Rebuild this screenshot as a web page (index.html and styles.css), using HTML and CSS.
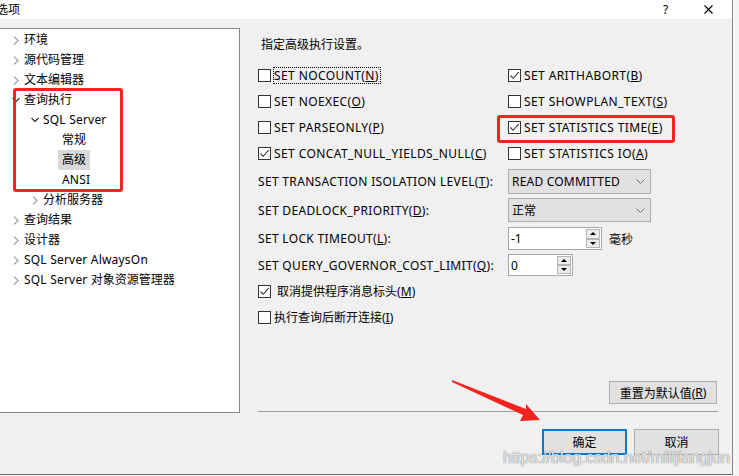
FILE: index.html
```html
<!DOCTYPE html>
<html>
<head>
<meta charset="utf-8">
<link rel="stylesheet" href="styles.css">
</head>
<body>
<div class="window">
  <div class="titlebar">
    <span class="title">选项</span>
    <span class="help">?</span>
    <span class="close"><svg width="9" height="9" viewBox="0 0 9 9"><path d="M0.5 0.5 L8.5 8.5 M8.5 0.5 L0.5 8.5" stroke="#000" stroke-width="1.1" fill="none"/></svg></span>
  </div>
  <div class="content">
    <div class="tree">
      <div class="node l0"><span class="chev"><svg width="6" height="9" viewBox="0 0 6 9"><path d="M1 0.5 L5 4.5 L1 8.5" stroke="#a6a6a6" stroke-width="1.3" fill="none"/></svg></span>环境</div>
      <div class="node l0"><span class="chev"><svg width="6" height="9" viewBox="0 0 6 9"><path d="M1 0.5 L5 4.5 L1 8.5" stroke="#a6a6a6" stroke-width="1.3" fill="none"/></svg></span>源代码管理</div>
      <div class="node l0"><span class="chev"><svg width="6" height="9" viewBox="0 0 6 9"><path d="M1 0.5 L5 4.5 L1 8.5" stroke="#a6a6a6" stroke-width="1.3" fill="none"/></svg></span>文本编辑器</div>
      <div class="node l0"><span class="chev"><svg width="8" height="6" viewBox="0 0 8 6"><path d="M0.5 1 L4 4.5 L7.5 1" stroke="#404040" stroke-width="1.3" fill="none"/></svg></span>查询执行</div>
      <div class="node l1"><span class="chev"><svg width="8" height="6" viewBox="0 0 8 6"><path d="M0.5 1 L4 4.5 L7.5 1" stroke="#404040" stroke-width="1.3" fill="none"/></svg></span><span class="lat">SQL Server</span></div>
      <div class="node l2"><span class="leaf">常规</span></div>
      <div class="node l2"><span class="leaf selected">高级</span></div>
      <div class="node l2"><span class="leaf lat">ANSI</span></div>
      <div class="node l1"><span class="chev"><svg width="6" height="9" viewBox="0 0 6 9"><path d="M1 0.5 L5 4.5 L1 8.5" stroke="#a6a6a6" stroke-width="1.3" fill="none"/></svg></span>分析服务器</div>
      <div class="node l0"><span class="chev"><svg width="6" height="9" viewBox="0 0 6 9"><path d="M1 0.5 L5 4.5 L1 8.5" stroke="#a6a6a6" stroke-width="1.3" fill="none"/></svg></span>查询结果</div>
      <div class="node l0"><span class="chev"><svg width="6" height="9" viewBox="0 0 6 9"><path d="M1 0.5 L5 4.5 L1 8.5" stroke="#a6a6a6" stroke-width="1.3" fill="none"/></svg></span>设计器</div>
      <div class="node l0"><span class="chev"><svg width="6" height="9" viewBox="0 0 6 9"><path d="M1 0.5 L5 4.5 L1 8.5" stroke="#a6a6a6" stroke-width="1.3" fill="none"/></svg></span><span class="lat">SQL Server AlwaysOn</span></div>
      <div class="node l0"><span class="chev"><svg width="6" height="9" viewBox="0 0 6 9"><path d="M1 0.5 L5 4.5 L1 8.5" stroke="#a6a6a6" stroke-width="1.3" fill="none"/></svg></span><span class="lat">SQL Server</span>&nbsp;对象资源管理器</div>
    </div>
    <div class="main">
      <div class="intro">指定高级执行设置。</div>
      <div class="checks">
        <div class="cb"><span class="box"></span><span class="txt focus">SET NOCOUNT(<u>N</u>)</span></div>
        <div class="cb"><span class="box"><svg width="11" height="11" viewBox="0 0 11 11"><path d="M1.5 5.5 L4.2 8.3 L9.6 2.2" stroke="#333" stroke-width="1.1" fill="none"/></svg></span><span class="txt">SET ARITHABORT(<u>B</u>)</span></div>
        <div class="cb"><span class="box"></span><span class="txt">SET NOEXEC(<u>O</u>)</span></div>
        <div class="cb"><span class="box"></span><span class="txt">SET SHOWPLAN_TEXT(<u>S</u>)</span></div>
        <div class="cb"><span class="box"></span><span class="txt">SET PARSEONLY(<u>P</u>)</span></div>
        <div class="cb"><span class="box"><svg width="11" height="11" viewBox="0 0 11 11"><path d="M1.5 5.5 L4.2 8.3 L9.6 2.2" stroke="#333" stroke-width="1.1" fill="none"/></svg></span><span class="txt">SET STATISTICS TIME(<u>E</u>)</span></div>
        <div class="cb"><span class="box"><svg width="11" height="11" viewBox="0 0 11 11"><path d="M1.5 5.5 L4.2 8.3 L9.6 2.2" stroke="#333" stroke-width="1.1" fill="none"/></svg></span><span class="txt">SET CONCAT_NULL_YIELDS_NULL(<u>C</u>)</span></div>
        <div class="cb"><span class="box"></span><span class="txt">SET STATISTICS IO(<u>A</u>)</span></div>
      </div>
      <div class="setting s1"><span class="lbl">SET TRANSACTION ISOLATION LEVEL(<u>T</u>):</span><div class="select"><span class="lat">READ COMMITTED</span><svg width="9" height="5" viewBox="0 0 9 5"><path d="M0.5 0.5 L4.5 4.5 L8.5 0.5" stroke="#707070" stroke-width="1" fill="none"/></svg></div></div>
      <div class="setting s2"><span class="lbl">SET DEADLOCK_PRIORITY(<u>D</u>):</span><div class="select">正常<svg width="9" height="5" viewBox="0 0 9 5"><path d="M0.5 0.5 L4.5 4.5 L8.5 0.5" stroke="#707070" stroke-width="1" fill="none"/></svg></div></div>
      <div class="setting s3"><span class="lbl">SET LOCK TIMEOUT(<u>L</u>):</span><div class="spin wide"><span class="val">-1</span><span class="arrows"><span class="ab"><i class="up"></i></span><span class="ab"><i class="down"></i></span></span></div><span class="unit">毫秒</span></div>
      <div class="setting s4"><span class="lbl">SET QUERY_GOVERNOR_COST_LIMIT(<u>Q</u>):</span><div class="spin narrow"><span class="val">0</span><span class="arrows"><span class="ab"><i class="up"></i></span><span class="ab"><i class="down"></i></span></span></div></div>
      <div class="cb single first"><span class="box"><svg width="11" height="11" viewBox="0 0 11 11"><path d="M1.5 5.5 L4.2 8.3 L9.6 2.2" stroke="#333" stroke-width="1.1" fill="none"/></svg></span><span class="txt">&nbsp;取消提供程序消息标头(<u>M</u>)</span></div>
      <div class="cb single"><span class="box"></span><span class="txt">执行查询后断开连接(<u>I</u>)</span></div>
      <div class="btn reset">重置为默认值(<u>R</u>)</div>
      <div class="sep"></div>
      <div class="buttons">
        <div class="btn ok">确定</div>
        <div class="btn cancel">取消</div>
      </div>
    </div>
  </div>
  <div class="mark box-tree"></div>
  <div class="mark box-stat"></div>
  <svg class="arrow" width="100" height="50" viewBox="0 0 100 50"><polygon points="5,6 79,35 79,30 93,46 73,47 76,41 5,8" fill="#f5231d"/></svg>
  <div class="watermark">https://blog.csdn.net/milijiangjun</div>
</div>
</body>
</html>
```

FILE: styles.css
```css
html, body {
  margin: 0;
  padding: 0;
}
body {
  width: 739px;
  height: 476px;
  overflow: hidden;
  background: #f5f5f5;
  font-family: "Noto Sans", "Noto Sans CJK SC", sans-serif;
  font-size: 12px;
  color: #000;
}
.window {
  position: relative;
  width: 733px;
  height: 475px;
  box-sizing: border-box;
  border-right: 1px solid #8a8a8a;
  border-bottom: 1px solid #6a6a6a;
  background: #f0f0f0;
  display: flex;
  flex-direction: column;
}
.titlebar {
  height: 19px;
  background: #fff;
  display: flex;
  align-items: center;
  flex: none;
}
.title {
  margin-left: -4px;
  line-height: 14px;
}
.help {
  margin-left: auto;
  width: 7px;
  line-height: 14px;
}
.close {
  margin-left: 34px;
  margin-right: 19px;
  display: flex;
}
.content {
  display: flex;
  flex: 1;
}
.tree {
  margin-top: 9px;
  padding-top: 1px;
  width: 240px;
  height: 385px;
  box-sizing: border-box;
  border: 1px solid #828790;
  border-left: none;
  background: #fff;
}
.lat {
  letter-spacing: 0.2px;
}
.node {
  height: 20px;
  line-height: 20px;
  display: flex;
  align-items: center;
  white-space: nowrap;
}
.node.l0 { padding-left: 8px; }
.node.l1 { padding-left: 27px; }
.node.l2 { padding-left: 58px; }
.chev {
  width: 16px;
  height: 20px;
  display: flex;
  align-items: center;
  justify-content: center;
}
.leaf {
  padding: 0 4px;
  line-height: 20px;
}
.leaf.selected {
  background: #d9d9d9;
}
.main {
  margin-left: 18px;
  width: 461px;
  display: flex;
  flex-direction: column;
}
.intro {
  margin-top: 18px;
  margin-left: 3px;
  line-height: 16px;
  height: 16px;
}
.checks {
  margin-top: 9px;
  display: grid;
  grid-template-columns: 250px 1fr;
  grid-auto-rows: 26px;
}
.cb {
  display: flex;
  align-items: center;
  white-space: nowrap;
}
.box {
  width: 13px;
  height: 13px;
  box-sizing: border-box;
  border: 1px solid #333;
  background: #fff;
  display: flex;
  align-items: center;
  justify-content: center;
  flex: none;
}
.txt {
  margin-left: 2px;
  border: 1px solid transparent;
  line-height: 15px;
  padding-right: 1px;
  letter-spacing: 0.4px;
}
.txt.focus {
  border: 1px dotted #000;
}
.setting {
  display: flex;
  align-items: center;
  white-space: nowrap;
}
.lbl {
  width: 250px;
  flex: none;
  letter-spacing: 0.33px;
}
.s1 { margin-top: 3px; height: 25px; }
.s2 { margin-top: 4px; height: 24px; }
.s3 { margin-top: 5px; height: 23px; }
.s4 { margin-top: 4px; height: 22px; }
.select {
  width: 143px;
  height: 100%;
  box-sizing: border-box;
  border: 1px solid #adadad;
  background: #e1e1e1;
  display: flex;
  align-items: center;
  justify-content: space-between;
  padding: 0 5px 0 3px;
}
.spin {
  height: 100%;
  box-sizing: border-box;
  border: 1px solid #a6a6a6;
  background: #fff;
  display: flex;
  align-items: stretch;
  padding: 1px;
}
.spin.wide { width: 94px; }
.spin.narrow { width: 65px; }
.val {
  flex: 1;
  display: flex;
  align-items: center;
  padding-left: 1px;
}
.arrows {
  width: 14px;
  display: flex;
  flex-direction: column;
}
.ab {
  flex: 1;
  box-sizing: border-box;
  border: 1px solid #b5b5b5;
  background: #ececec;
  display: flex;
  align-items: center;
  justify-content: center;
}
.up {
  width: 0;
  height: 0;
  border-left: 3px solid transparent;
  border-right: 3px solid transparent;
  border-bottom: 3px solid #000;
}
.down {
  width: 0;
  height: 0;
  border-left: 3px solid transparent;
  border-right: 3px solid transparent;
  border-top: 3px solid #000;
}
.unit {
  margin-left: 7px;
}
.cb.single {
  height: 26px;
}
.cb.single .txt {
  letter-spacing: 0;
}
.cb.first {
  margin-top: 2px;
}
.btn {
  box-sizing: border-box;
  background: #e1e1e1;
  border: 1px solid #adadad;
  display: flex;
  align-items: center;
  justify-content: center;
}
.reset {
  margin-top: 51px;
  align-self: flex-end;
  margin-right: 2px;
  width: 108px;
  height: 23px;
}
.sep {
  margin-top: 7px;
  width: 460px;
  height: 1px;
  background: #a0a0a0;
}
.buttons {
  margin-top: 17px;
  display: flex;
  justify-content: flex-end;
  gap: 7px;
}
.ok, .cancel {
  width: 85px;
  height: 26px;
}
.ok {
  border: 2px solid #0078d7;
}
.mark {
  position: absolute;
  box-sizing: border-box;
  border: 3px solid #f5231d;
  border-radius: 3px;
}
.box-tree {
  left: 13px;
  top: 88px;
  width: 110px;
  height: 104px;
}
.box-stat {
  left: 497px;
  top: 115px;
  width: 178px;
  height: 28px;
}
.arrow {
  position: absolute;
  left: 447px;
  top: 374px;
}
.watermark {
  position: absolute;
  left: 503px;
  top: 449px;
  font-family: "Liberation Sans", sans-serif;
  font-size: 16px;
  line-height: 18px;
  color: rgba(255, 255, 255, 0.85);
  text-shadow: 0 0 1px rgba(90, 90, 90, 0.8), 0 0 1px rgba(90, 90, 90, 0.6);
  white-space: nowrap;
}
```
